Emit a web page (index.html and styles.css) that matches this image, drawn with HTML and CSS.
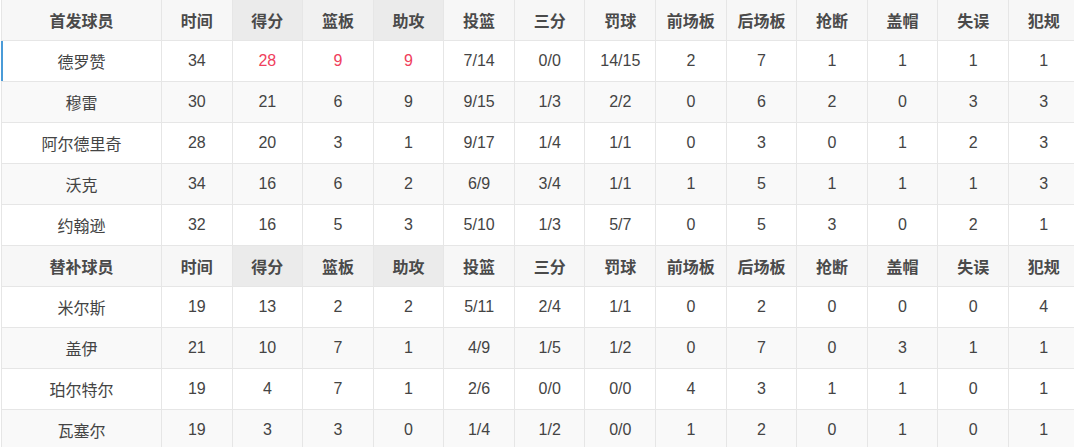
FILE: index.html
```html
<!DOCTYPE html>
<html lang="zh">
<head>
<meta charset="utf-8">
<link rel="stylesheet" href="styles.css">
</head>
<body>
<div class="box">
  <div class="row head">
    <div class="c">首发球员</div><div class="c">时间</div><div class="c sort">得分</div><div class="c sort2">篮板</div><div class="c sort">助攻</div><div class="c">投篮</div><div class="c">三分</div><div class="c">罚球</div><div class="c">前场板</div><div class="c">后场板</div><div class="c">抢断</div><div class="c">盖帽</div><div class="c">失误</div><div class="c">犯规</div>
  </div>
  <div class="row active">
    <div class="c">德罗赞</div><div class="c">34</div><div class="c red">28</div><div class="c red">9</div><div class="c red">9</div><div class="c">7/14</div><div class="c">0/0</div><div class="c">14/15</div><div class="c">2</div><div class="c">7</div><div class="c">1</div><div class="c">1</div><div class="c">1</div><div class="c">1</div>
  </div>
  <div class="row alt">
    <div class="c">穆雷</div><div class="c">30</div><div class="c">21</div><div class="c">6</div><div class="c">9</div><div class="c">9/15</div><div class="c">1/3</div><div class="c">2/2</div><div class="c">0</div><div class="c">6</div><div class="c">2</div><div class="c">0</div><div class="c">3</div><div class="c">3</div>
  </div>
  <div class="row">
    <div class="c">阿尔德里奇</div><div class="c">28</div><div class="c">20</div><div class="c">3</div><div class="c">1</div><div class="c">9/17</div><div class="c">1/4</div><div class="c">1/1</div><div class="c">0</div><div class="c">3</div><div class="c">0</div><div class="c">1</div><div class="c">2</div><div class="c">3</div>
  </div>
  <div class="row alt">
    <div class="c">沃克</div><div class="c">34</div><div class="c">16</div><div class="c">6</div><div class="c">2</div><div class="c">6/9</div><div class="c">3/4</div><div class="c">1/1</div><div class="c">1</div><div class="c">5</div><div class="c">1</div><div class="c">1</div><div class="c">1</div><div class="c">3</div>
  </div>
  <div class="row">
    <div class="c">约翰逊</div><div class="c">32</div><div class="c">16</div><div class="c">5</div><div class="c">3</div><div class="c">5/10</div><div class="c">1/3</div><div class="c">5/7</div><div class="c">0</div><div class="c">5</div><div class="c">3</div><div class="c">0</div><div class="c">2</div><div class="c">1</div>
  </div>
  <div class="row head">
    <div class="c">替补球员</div><div class="c">时间</div><div class="c sort">得分</div><div class="c sort2">篮板</div><div class="c sort">助攻</div><div class="c">投篮</div><div class="c">三分</div><div class="c">罚球</div><div class="c">前场板</div><div class="c">后场板</div><div class="c">抢断</div><div class="c">盖帽</div><div class="c">失误</div><div class="c">犯规</div>
  </div>
  <div class="row">
    <div class="c">米尔斯</div><div class="c">19</div><div class="c">13</div><div class="c">2</div><div class="c">2</div><div class="c">5/11</div><div class="c">2/4</div><div class="c">1/1</div><div class="c">0</div><div class="c">2</div><div class="c">0</div><div class="c">0</div><div class="c">0</div><div class="c">4</div>
  </div>
  <div class="row alt">
    <div class="c">盖伊</div><div class="c">21</div><div class="c">10</div><div class="c">7</div><div class="c">1</div><div class="c">4/9</div><div class="c">1/5</div><div class="c">1/2</div><div class="c">0</div><div class="c">7</div><div class="c">0</div><div class="c">3</div><div class="c">1</div><div class="c">1</div>
  </div>
  <div class="row">
    <div class="c">珀尔特尔</div><div class="c">19</div><div class="c">4</div><div class="c">7</div><div class="c">1</div><div class="c">2/6</div><div class="c">0/0</div><div class="c">0/0</div><div class="c">4</div><div class="c">3</div><div class="c">1</div><div class="c">1</div><div class="c">0</div><div class="c">1</div>
  </div>
  <div class="row alt">
    <div class="c">瓦塞尔</div><div class="c">19</div><div class="c">3</div><div class="c">3</div><div class="c">0</div><div class="c">1/4</div><div class="c">1/2</div><div class="c">0/0</div><div class="c">1</div><div class="c">2</div><div class="c">0</div><div class="c">1</div><div class="c">0</div><div class="c">1</div>
  </div>
</div>
</body>
</html>
```

FILE: styles.css
```css
html, body {
  margin: 0;
  padding: 0;
  background: #fff;
  overflow: hidden;
}
body {
  font-family: "Liberation Sans", "Noto Sans CJK SC", sans-serif;
  font-size: 16px;
  color: #444;
}
.box {
  margin-left: 1px;
  width: 1080px;
}
.row {
  display: grid;
  grid-template-columns: 160px repeat(13, 70.58px);
  height: 41px;
  border-left: 1px solid #e6e6e6;
  background: #fff;
}
.row.alt {
  background: #f9f9f9;
}
.row.head {
  background: #f7f7f7;
  font-weight: bold;
  color: #4a4a4a;
}
.row.active {
  border-left-color: #4a9bd8;
  box-shadow: inset 1px 0 0 #4a9bd8;
}
.c {
  box-sizing: border-box;
  display: flex;
  align-items: center;
  justify-content: center;
  border-right: 1px solid #e6e6e6;
  border-bottom: 1px solid #e6e6e6;
  white-space: nowrap;
}
.row.active .c:first-child {
  margin-left: -1px;
  padding-left: 1px;
}
.head .sort {
  background: #ebebeb;
}
.head .sort2 {
  background: #f1f1f1;
}
.red {
  color: #f0405c;
}
```
